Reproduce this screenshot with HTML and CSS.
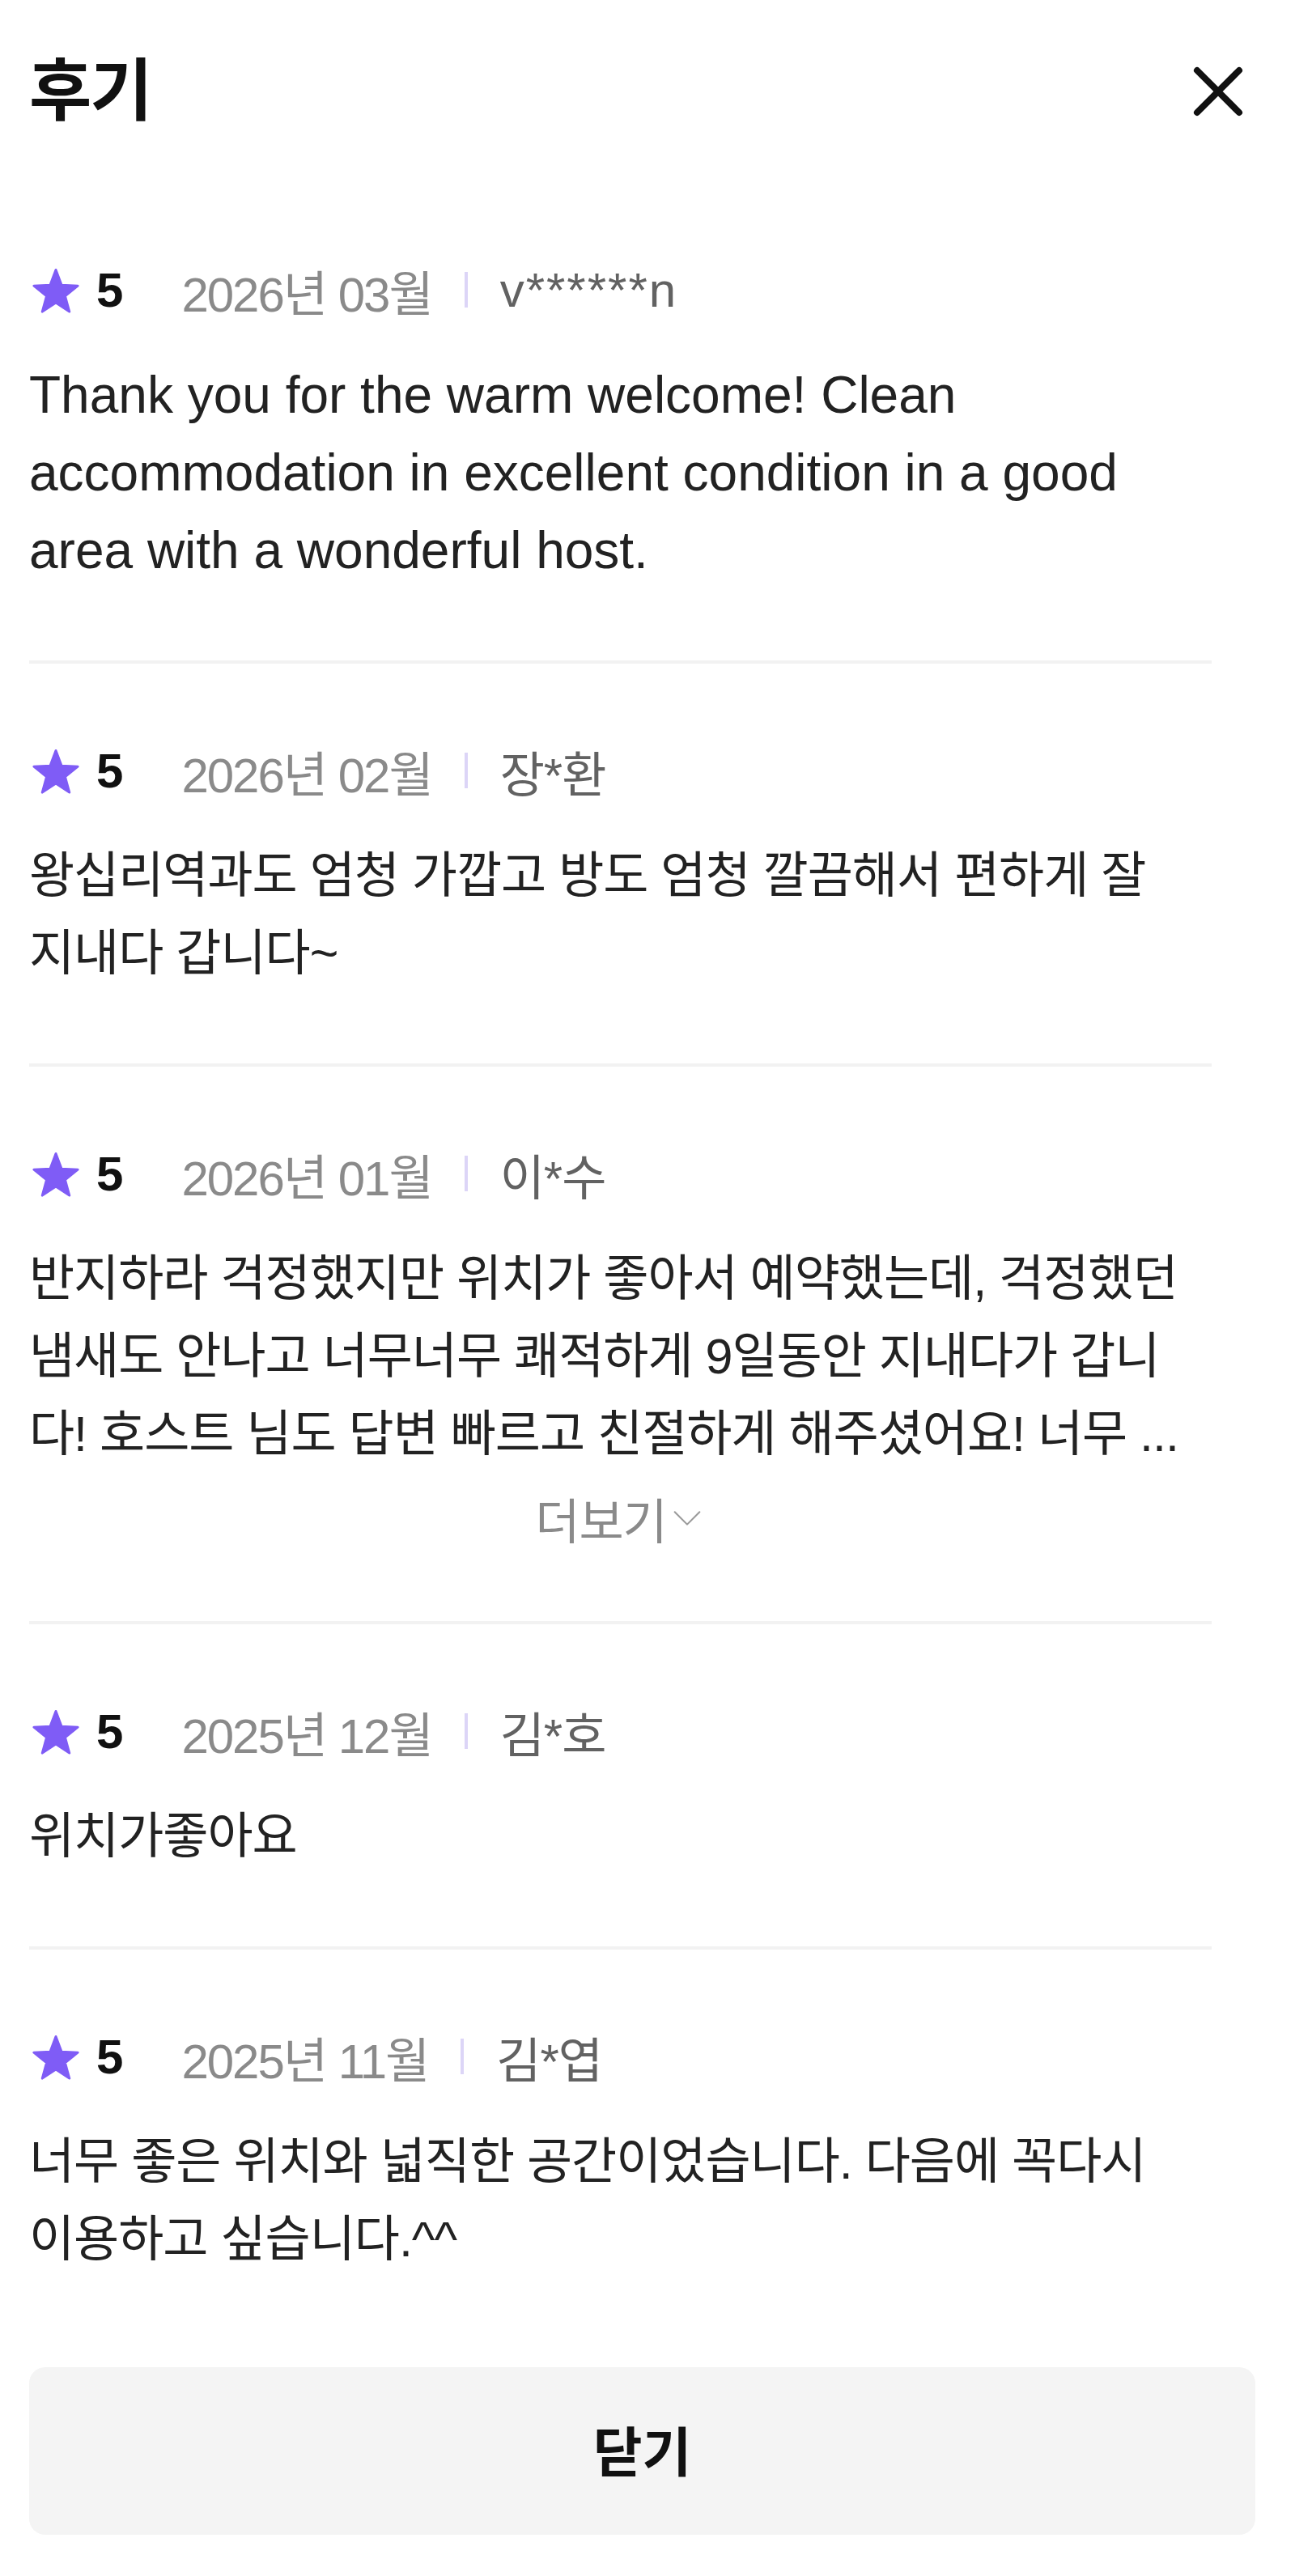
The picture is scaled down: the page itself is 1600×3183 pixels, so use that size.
FILE: index.html
```html
<!DOCTYPE html>
<html lang="ko">
<head>
    <meta charset="UTF-8">
    <meta name="viewport" content="width=device-width, initial-scale=1.0">
    <title>후기</title>
    <link rel="stylesheet" href="styles.css">
</head>
<body>
    <div class="sheet">
        <div class="sheet-header">
            <h2 class="sheet-title">후기</h2>
            <button class="close-btn" aria-label="닫기">
                <svg viewBox="0 0 24 24" fill="none" stroke="#111" stroke-width="2" stroke-linecap="round">
                    <path d="M5.5 5.5L18.5 18.5M18.5 5.5L5.5 18.5"/>
                </svg>
            </button>
        </div>

        <ul class="review-list">
            <li class="review">
                <div class="review-meta">
                    <svg class="star" viewBox="0 0 24 24"><path d="M12 2.5L14.35 8.76 21.04 9.06 15.8 13.24 17.58 19.69 12 16 6.42 19.69 8.2 13.24 2.96 9.06 9.65 8.76Z"/></svg>
                    <span class="score">5</span>
                    <span class="review-date">2026년 03월</span>
                    <span class="meta-sep"></span>
                    <span class="reviewer" lang="en">v******n</span>
                </div>
                <p class="review-text" lang="en">Thank you for the warm welcome! Clean accommodation in excellent condition in a good area with a wonderful host.</p>
            </li>
            <li class="review">
                <div class="review-meta">
                    <svg class="star" viewBox="0 0 24 24"><path d="M12 2.5L14.35 8.76 21.04 9.06 15.8 13.24 17.58 19.69 12 16 6.42 19.69 8.2 13.24 2.96 9.06 9.65 8.76Z"/></svg>
                    <span class="score">5</span>
                    <span class="review-date">2026년 02월</span>
                    <span class="meta-sep"></span>
                    <span class="reviewer">장*환</span>
                </div>
                <p class="review-text">왕십리역과도 엄청 가깝고 방도 엄청 깔끔해서 편하게 잘 지내다 갑니다~</p>
            </li>
            <li class="review">
                <div class="review-meta">
                    <svg class="star" viewBox="0 0 24 24"><path d="M12 2.5L14.35 8.76 21.04 9.06 15.8 13.24 17.58 19.69 12 16 6.42 19.69 8.2 13.24 2.96 9.06 9.65 8.76Z"/></svg>
                    <span class="score">5</span>
                    <span class="review-date">2026년 01월</span>
                    <span class="meta-sep"></span>
                    <span class="reviewer">이*수</span>
                </div>
                <p class="review-text">반지하라 걱정했지만 위치가 좋아서 예약했는데, 걱정했던 냄새도 안나고 너무너무 쾌적하게 9일동안 지내다가 갑니다! 호스트 님도 답변 빠르고 친절하게 해주셨어요! 너무 ...</p>
                <button class="more-btn">더보기
                    <svg viewBox="0 0 24 24" fill="none" stroke="#9a9a9a" stroke-width="1.1" stroke-linecap="round" stroke-linejoin="round"><path d="M4 8.5L12 16.5 20 8.5"/></svg>
                </button>
            </li>
            <li class="review">
                <div class="review-meta">
                    <svg class="star" viewBox="0 0 24 24"><path d="M12 2.5L14.35 8.76 21.04 9.06 15.8 13.24 17.58 19.69 12 16 6.42 19.69 8.2 13.24 2.96 9.06 9.65 8.76Z"/></svg>
                    <span class="score">5</span>
                    <span class="review-date">2025년 12월</span>
                    <span class="meta-sep"></span>
                    <span class="reviewer">김*호</span>
                </div>
                <p class="review-text">위치가좋아요</p>
            </li>
            <li class="review">
                <div class="review-meta">
                    <svg class="star" viewBox="0 0 24 24"><path d="M12 2.5L14.35 8.76 21.04 9.06 15.8 13.24 17.58 19.69 12 16 6.42 19.69 8.2 13.24 2.96 9.06 9.65 8.76Z"/></svg>
                    <span class="score">5</span>
                    <span class="review-date">2025년 11월</span>
                    <span class="meta-sep"></span>
                    <span class="reviewer">김*엽</span>
                </div>
                <p class="review-text">너무 좋은 위치와 넓직한 공간이었습니다. 다음에 꼭다시 이용하고 싶습니다.^^</p>
            </li>
        </ul>

        <div class="sheet-footer">
            <button class="done-btn">닫기</button>
        </div>
    </div>
</body>
</html>
```

FILE: styles.css
```css
body {
    margin: 0;
    padding: 0;
    font-family: "Liberation Sans", "Noto Sans CJK KR", sans-serif;
    color: #222;
    background-color: #fff;
}
.sheet-header {
    display: flex;
    align-items: center;
    justify-content: space-between;
    height: 226px;
    padding: 0 47px 0 36px;
    box-sizing: border-box;
}
.sheet-title {
    margin: 0;
    font-size: 84px;
    font-weight: 700;
    line-height: 1;
    color: #111;
    letter-spacing: -2px;
}
.close-btn {
    display: flex;
    width: 96px;
    height: 96px;
    padding: 0;
    border: none;
    background: none;
    cursor: pointer;
}
.close-btn svg {
    width: 96px;
    height: 96px;
}
.review-list {
    list-style: none;
    margin: 0 103px 0 36px;
    padding: 0;
}
.review {
    padding: 92px 0 88px;
    border-bottom: 4px solid #f2f2f2;
}
.review:last-child {
    border-bottom: none;
}
.review-meta {
    display: flex;
    align-items: center;
    height: 80px;
    font-size: 60px;
}
.star {
    width: 72px;
    height: 72px;
    margin: 8px 14px 0 -3px;
    fill: #7f5cf6;
    stroke: #7f5cf6;
    stroke-width: 1;
    stroke-linejoin: round;
}
.score {
    font-weight: 700;
    color: #111;
}
.review-date {
    margin-left: 72px;
    color: #8a8a8a;
    letter-spacing: -2px;
}
.meta-sep {
    width: 4px;
    height: 44px;
    margin: 0 40px;
    background-color: #dcd5f7;
}
.reviewer {
    color: #626262;
    letter-spacing: -1px;
}
.reviewer:lang(en) {
    letter-spacing: 2px;
}
.review-text {
    margin: 42px 31px 0 0;
    font-size: 61px;
    line-height: 96px;
    letter-spacing: -1px;
}
.review-text:lang(en) {
    font-size: 64px;
    letter-spacing: 0;
}
.more-btn {
    display: flex;
    align-items: center;
    justify-content: center;
    width: 100%;
    height: 80px;
    margin-top: 15px;
    padding: 0;
    border: none;
    background: none;
    font-family: inherit;
    font-size: 60px;
    color: #8a8a8a;
    letter-spacing: -1px;
    cursor: pointer;
}
.more-btn svg {
    width: 46px;
    height: 46px;
    margin-left: 2px;
}
.sheet-footer {
    padding: 22px 49px 53px 36px;
}
.done-btn {
    display: block;
    width: 100%;
    height: 207px;
    padding: 0 0 8px;
    border: none;
    border-radius: 20px;
    background-color: #f4f4f4;
    font-family: inherit;
    font-size: 66px;
    font-weight: 700;
    color: #111;
    cursor: pointer;
}
```
